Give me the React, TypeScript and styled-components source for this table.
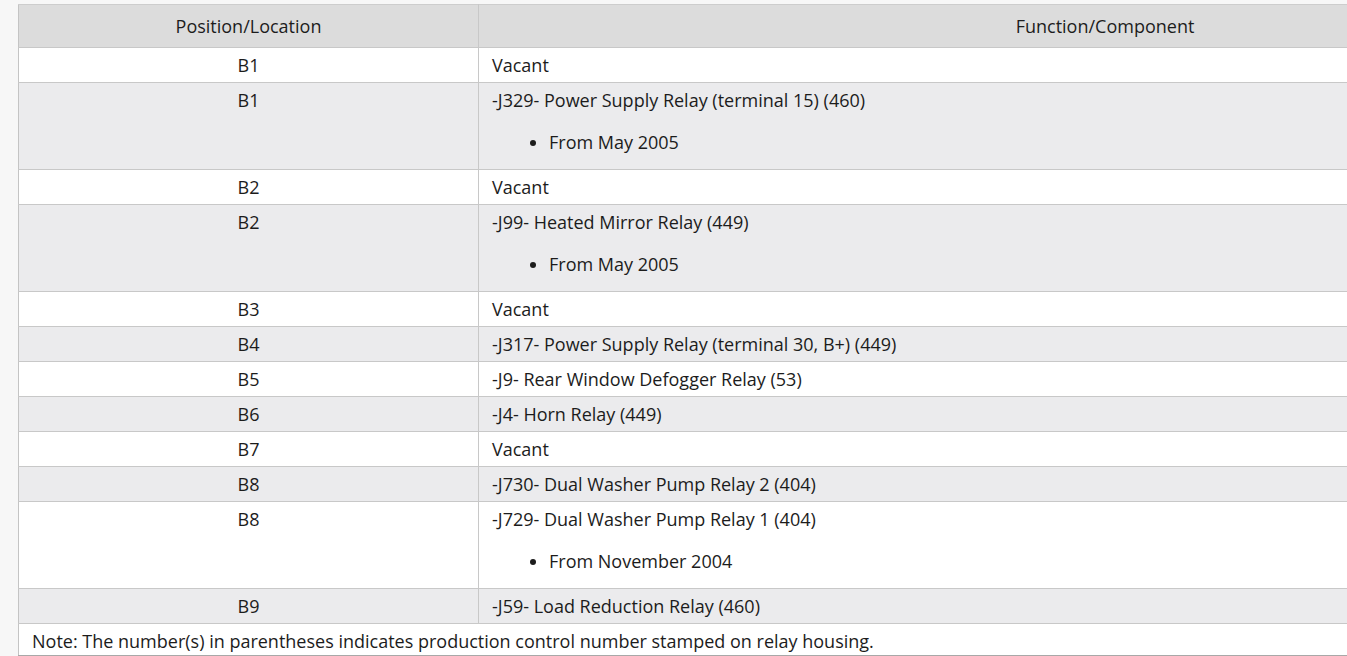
import styled, { createGlobalStyle } from "styled-components";

type Row = {
  position: string;
  func: string;
  note?: string;
};

const rows: Row[] = [
  { position: "B1", func: "Vacant" },
  { position: "B1", func: "-J329- Power Supply Relay (terminal 15) (460)", note: "From May 2005" },
  { position: "B2", func: "Vacant" },
  { position: "B2", func: "-J99- Heated Mirror Relay (449)", note: "From May 2005" },
  { position: "B3", func: "Vacant" },
  { position: "B4", func: "-J317- Power Supply Relay (terminal 30, B+) (449)" },
  { position: "B5", func: "-J9- Rear Window Defogger Relay (53)" },
  { position: "B6", func: "-J4- Horn Relay (449)" },
  { position: "B7", func: "Vacant" },
  { position: "B8", func: "-J730- Dual Washer Pump Relay 2 (404)" },
  { position: "B8", func: "-J729- Dual Washer Pump Relay 1 (404)", note: "From November 2004" },
  { position: "B9", func: "-J59- Load Reduction Relay (460)" },
];

const GlobalStyle = createGlobalStyle`
  html, body {
    margin: 0;
    padding: 0;
    overflow: hidden;
  }
  body {
    font-family: "Open Sans", "Noto Sans", sans-serif;
    color: #1c1c1c;
    background: #f7f7f7;
  }
`;

const Page = styled.div`
  width: 1347px;
  height: 656px;
  overflow: hidden;
  box-sizing: border-box;
  padding: 4px 0 0 18px;
  background: #f7f7f7;
`;

const Table = styled.table`
  width: 1714px;
  border-collapse: collapse;
  background: #fff;
  font-size: 18px;
  line-height: 22px;
  border-left: 1px solid #c4c4c4;
  border-top: 1px solid #cdcdcd;
`;

const HeadCell = styled.th<{ $w?: number }>`
  box-sizing: border-box;
  width: ${(p) => (p.$w ? `${p.$w}px` : "auto")};
  background: #dcdcdc;
  font-weight: 400;
  text-align: center;
  padding: 10px 13px;
  border-bottom: 1px solid #c8c8c8;
  border-right: 1px solid #c8c8c8;
`;

const BodyRow = styled.tr<{ $alt: boolean }>`
  background: ${(p) => (p.$alt ? "#ebebed" : "#fff")};
`;

const PosCell = styled.td`
  text-align: center;
  vertical-align: top;
  padding: 6px 13px;
  border-bottom: 1px solid #c8c8c8;
  border-right: 1px solid #c8c8c8;
`;

const FuncCell = styled.td`
  text-align: left;
  vertical-align: top;
  padding: 6px 13px;
  border-bottom: 1px solid #c8c8c8;
`;

const Bullets = styled.ul`
  margin: 20px 0 10px;
  padding-left: 57px;
`;

const NoteCell = styled.td`
  padding: 6px 13px 3px;
  background: #fff;
  border-bottom: 1px solid #a8a8a8;
`;

export default function App() {
  return (
    <>
      <GlobalStyle />
      <Page>
        <Table>
          <thead>
            <tr>
              <HeadCell $w={460}>Position/Location</HeadCell>
              <HeadCell>Function/Component</HeadCell>
            </tr>
          </thead>
          <tbody>
            {rows.map((r, i) => (
              <BodyRow key={i} $alt={i % 2 === 1}>
                <PosCell>{r.position}</PosCell>
                <FuncCell>
                  {r.func}
                  {r.note && (
                    <Bullets>
                      <li>{r.note}</li>
                    </Bullets>
                  )}
                </FuncCell>
              </BodyRow>
            ))}
            <tr>
              <NoteCell colSpan={2}>
                Note: The number(s) in parentheses indicates production control number stamped on relay housing.
              </NoteCell>
            </tr>
          </tbody>
        </Table>
      </Page>
    </>
  );
}
